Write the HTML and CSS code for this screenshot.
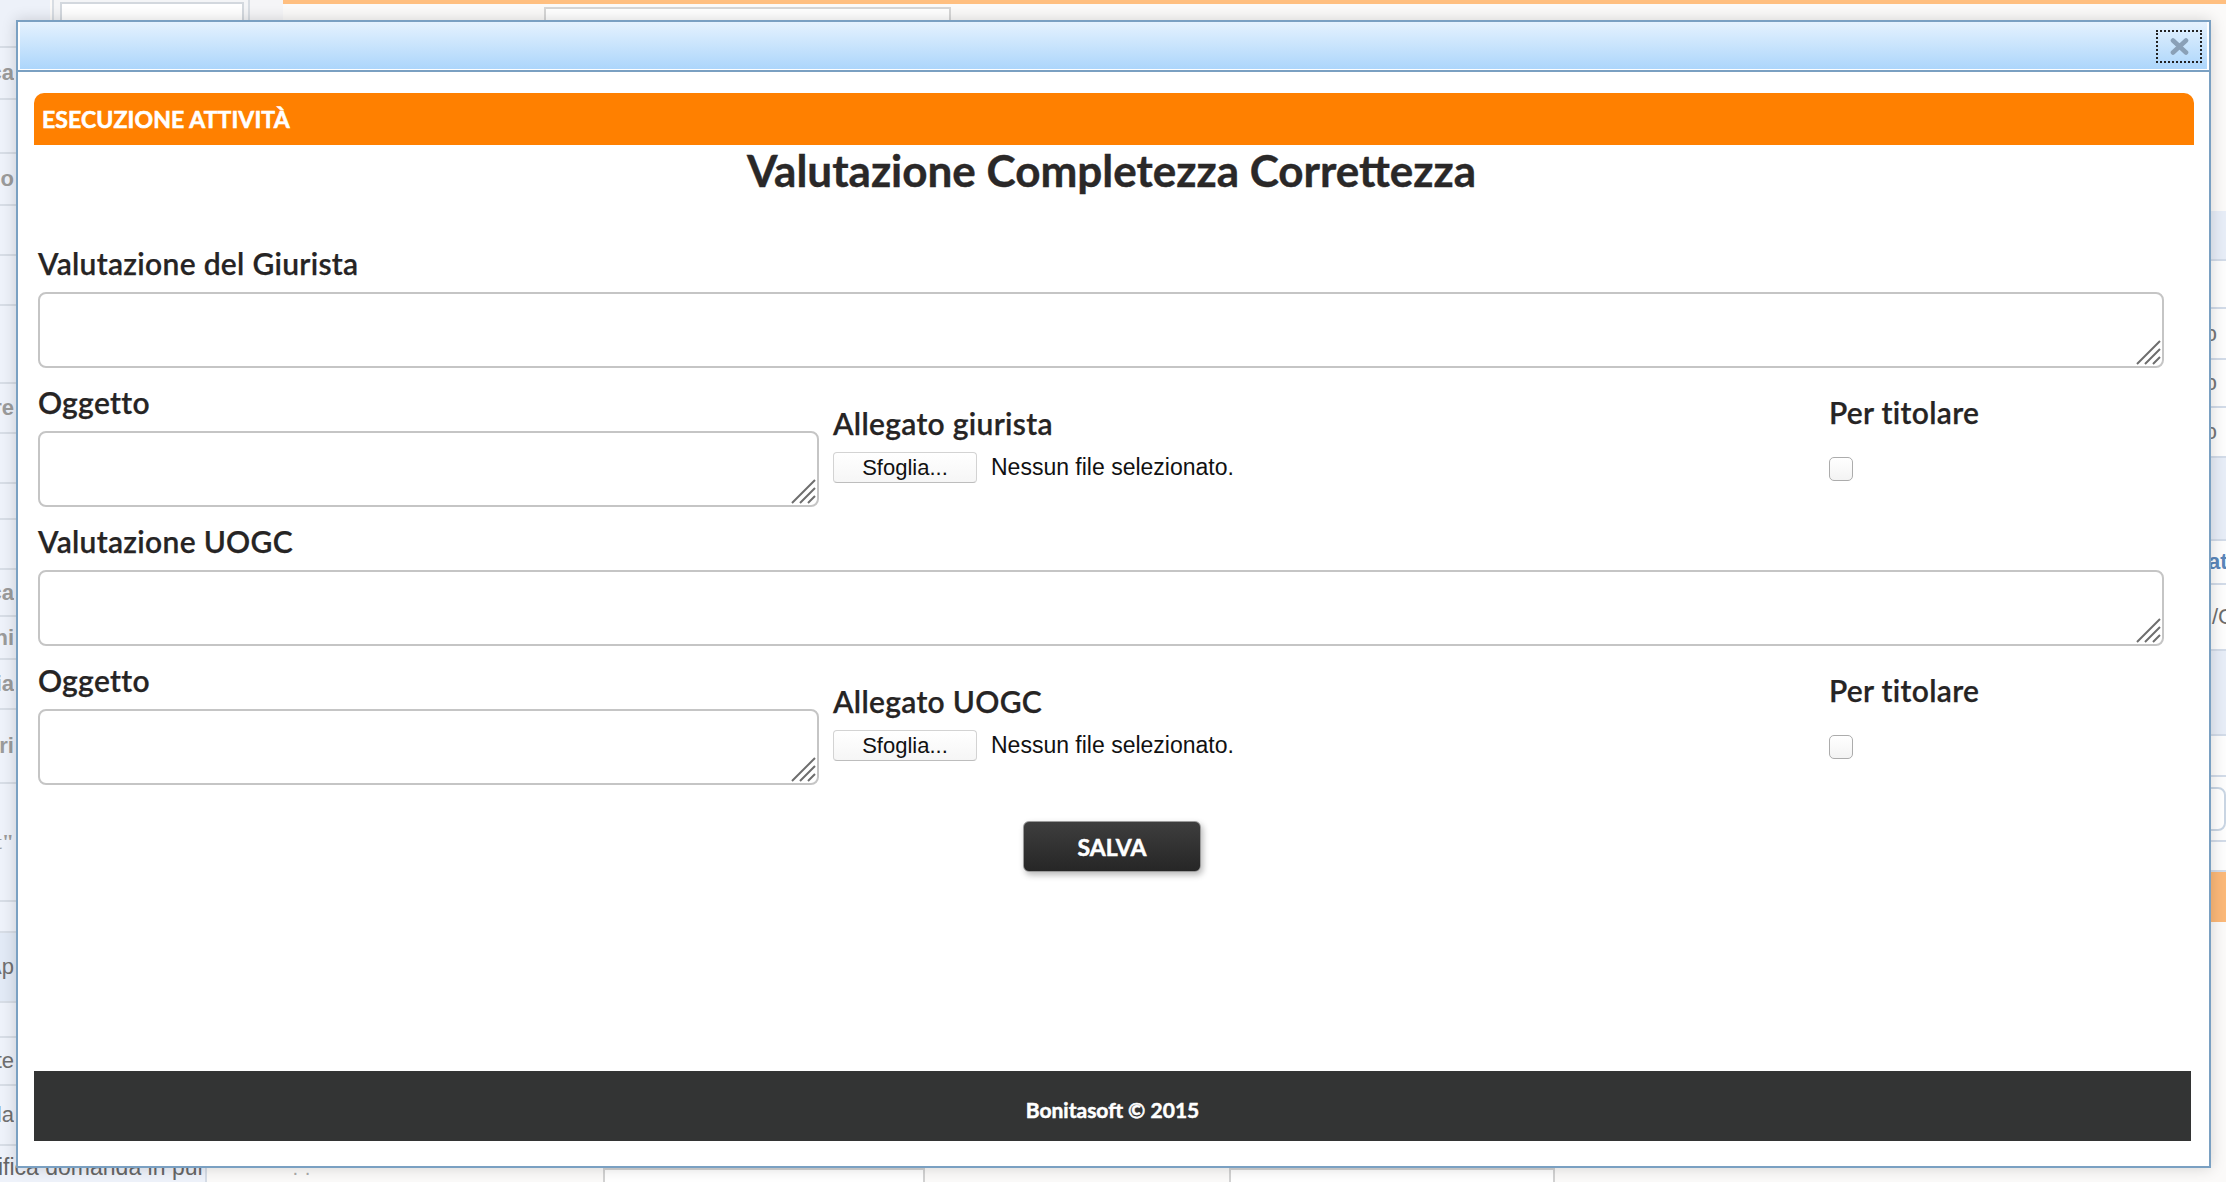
FILE: index.html
```html
<!DOCTYPE html>
<html lang="it">
<head>
<meta charset="utf-8">
<title>Esecuzione attività</title>
<link rel="stylesheet" href="styles.css">
</head>
<body>
<div class="page">
  <header class="topband">
    <div class="tb-side"></div>
    <div class="tb-box"><div class="tb-input"></div></div>
    <div class="tb-gap"></div>
    <div class="tb-main">
      <span class="tb-ghost">il tipo</span>
      <div class="tb-field"></div>
    </div>
  </header>
  <div class="content">
    <nav class="sidebar">
      <div class="side-row s52"><span class="fbox"><span class="frag">Pratica</span></span></div>
      <div class="side-row s54"></div>
      <div class="side-row s52"><span class="fbox"><span class="frag">Calendario</span></span></div>
      <div class="side-row s50"></div>
      <div class="side-row s50"></div>
      <div class="side-row s78"></div>
      <div class="side-row s50"><span class="fbox"><span class="frag">Protocollatore</span></span></div>
      <div class="side-row s50"></div>
      <div class="side-row s36"></div>
      <div class="side-row s50"></div>
      <div class="side-row s47"><span class="fbox"><span class="frag">Verifica</span></span></div>
      <div class="side-row s43"><span class="fbox"><span class="frag">Notifichi</span></span></div>
      <div class="side-row s50"><span class="fbox"><span class="frag">Istruttoria</span></span></div>
      <div class="side-row s74"><span class="fbox"><span class="frag">Istruttori</span></span></div>
      <div class="side-row s118"><span class="fbox"><span class="frag serif">"Art"</span></span></div>
      <div class="side-row s31"></div>
      <div class="side-row s70 hl"><span class="fbox"><span class="frag dark">Ap</span></span></div>
      <div class="side-row s35"></div>
      <div class="side-row s48"><span class="fbox"><span class="frag dark">Richieste</span></span></div>
      <div class="side-row s60"><span class="fbox"><span class="frag dark">Scheda</span></span></div>
      <div class="side-last">ifica domanda in pur</div>
    </nav>
    <main class="main">
      <div class="main-area">
        <div class="bottom-boxes">
          <span class="bb-ghost">· ·</span>
          <div class="bb-box one"></div>
          <div class="bb-box two"></div>
        </div>
      </div>
      <aside class="rpanel">
        <div class="rp-row blue h50"></div>
        <div class="rp-row h48"></div>
        <div class="rp-row h51 end"><span>Esito</span></div>
        <div class="rp-row h48 end"><span>Tipo</span></div>
        <div class="rp-row h50 end"><span>Anno</span></div>
        <div class="rp-row blue h83"></div>
        <div class="rp-row h44 strong"><span>Stato</span></div>
        <div class="rp-row h66 slash"><span>/CDR</span></div>
        <div class="rp-row blue h85"></div>
        <div class="rp-row h41"></div>
        <div class="rp-row h65 boxed"><div class="rp-btn"></div></div>
        <div class="rp-row h30"></div>
        <div class="rp-row orange h50"></div>
      </aside>
    </main>
  </div>
</div>

<div class="modal" role="dialog" aria-label="Esecuzione attività">
  <div class="titlebar">
    <button class="close" aria-label="Chiudi">
      <svg width="19" height="17" viewBox="0 0 19 17"><path d="M3 2.5 L16 14.5 M16 2.5 L3 14.5" stroke="#8aa0b7" stroke-width="4.6" stroke-linecap="round"/></svg>
    </button>
  </div>
  <div class="mbody">
    <div class="hdr">ESECUZIONE ATTIVITÀ</div>
    <h1 class="title">Valutazione Completezza Correttezza</h1>
    <form class="form">
      <div class="field">
        <label class="lbl" for="vg">Valutazione del Giurista</label>
        <div class="ta"><textarea id="vg"></textarea><svg class="grip" width="26" height="26" viewBox="0 0 26 26"><path d="M2 25 L25 2 M10 25 L25 10 M18 25 L25 18" stroke="#6e6e6e" stroke-width="2"/></svg></div>
      </div>
      <div class="row">
        <div class="field">
          <label class="lbl" for="og1">Oggetto</label>
          <div class="ta"><textarea id="og1"></textarea><svg class="grip" width="26" height="26" viewBox="0 0 26 26"><path d="M2 25 L25 2 M10 25 L25 10 M18 25 L25 18" stroke="#6e6e6e" stroke-width="2"/></svg></div>
        </div>
        <div class="field col-file">
          <span class="lbl">Allegato giurista</span>
          <div class="file"><span class="file-btn">Sfoglia...</span><span class="file-name">Nessun file selezionato.</span></div>
        </div>
        <div class="field col-check">
          <label class="lbl" for="pt1">Per titolare</label>
          <input type="checkbox" id="pt1" class="check">
        </div>
      </div>
      <div class="field gap">
        <label class="lbl" for="vu">Valutazione UOGC</label>
        <div class="ta"><textarea id="vu"></textarea><svg class="grip" width="26" height="26" viewBox="0 0 26 26"><path d="M2 25 L25 2 M10 25 L25 10 M18 25 L25 18" stroke="#6e6e6e" stroke-width="2"/></svg></div>
      </div>
      <div class="row">
        <div class="field">
          <label class="lbl" for="og2">Oggetto</label>
          <div class="ta"><textarea id="og2"></textarea><svg class="grip" width="26" height="26" viewBox="0 0 26 26"><path d="M2 25 L25 2 M10 25 L25 10 M18 25 L25 18" stroke="#6e6e6e" stroke-width="2"/></svg></div>
        </div>
        <div class="field col-file">
          <span class="lbl">Allegato UOGC</span>
          <div class="file"><span class="file-btn">Sfoglia...</span><span class="file-name">Nessun file selezionato.</span></div>
        </div>
        <div class="field col-check">
          <label class="lbl" for="pt2">Per titolare</label>
          <input type="checkbox" id="pt2" class="check">
        </div>
      </div>
      <div class="actions"><button type="button" class="save">SALVA</button></div>
    </form>
    <footer class="mfoot">Bonitasoft © 2015</footer>
  </div>
</div>
</body>
</html>
```

FILE: styles.css
```css
html, body {
  margin: 0;
  padding: 0;
}
body {
  width: 2226px;
  height: 1182px;
  overflow: hidden;
  position: relative;
  background: #fbfaf9;
  font-family: "Liberation Sans", Arial, sans-serif;
}

/* ---------- background page ---------- */
.page {
  display: flex;
  flex-direction: column;
  height: 1182px;
}
.topband {
  display: flex;
  height: 48px;
  flex: 0 0 auto;
}
.tb-side {
  width: 50px;
  background: #edf1f9;
  border-bottom: 2px solid #d6dce5;
  box-sizing: border-box;
}
.tb-box {
  width: 198px;
  margin-left: 2px;
  box-sizing: border-box;
  border-left: 2px solid #d8dde3;
  border-right: 2px solid #d8dde3;
  background: #f4f5f7;
  padding: 2px 4px 0 6px;
}
.tb-input {
  height: 38px;
  border: 2px solid #d3d8de;
  background: linear-gradient(#ffffff 60%, #f1f1f1);
}
.tb-gap {
  width: 33px;
  background: #f5f5f7;
}
.tb-main {
  flex: 1;
  border-top: 4px solid #ffbf80;
  background: #fbfaf9;
  display: flex;
  align-items: flex-start;
  padding-left: 34px;
}
.tb-ghost {
  margin-top: 12px;
  color: #b5b5b5;
  font-size: 22px;
  font-weight: 700;
  width: 227px;
}
.tb-field {
  margin-top: 3px;
  width: 403px;
  height: 40px;
  border: 2px solid #d6d6d6;
  background: #fff;
}
.content {
  flex: 1;
  display: flex;
  min-height: 0;
}
.sidebar {
  width: 207px;
  flex: 0 0 auto;
  background: #eef2fa;
  border-right: 2px solid #d5dce6;
  box-sizing: border-box;
  display: flex;
  flex-direction: column;
}
.side-row {
  flex: 0 0 auto;
  border-bottom: 2px solid #d7dde6;
  box-sizing: border-box;
  display: flex;
  align-items: center;
}
.side-row.hl { background: #e2eaf6; }
.s31 { height: 31px; }
.s35 { height: 35px; }
.s36 { height: 36px; }
.s43 { height: 43px; }
.s47 { height: 47px; }
.s48 { height: 48px; }
.s50 { height: 50px; }
.s52 { height: 52px; }
.s54 { height: 54px; }
.s60 { height: 60px; }
.s70 { height: 70px; }
.s74 { height: 74px; }
.s78 { height: 78px; }
.s118 { height: 118px; }
.fbox {
  width: 14px;
  display: flex;
  justify-content: flex-end;
  overflow: hidden;
}
.frag {
  flex: 0 0 auto;
  white-space: nowrap;
  color: #9b9b9b;
  font-size: 22px;
  font-weight: 700;
}
.frag.serif { font-family: "Liberation Serif", serif; }
.frag.dark { color: #707070; font-weight: 400; }
.side-last {
  margin-top: auto;
  height: 30px;
  line-height: 30px;
  padding-top: 4px;
  margin-left: -2px;
  white-space: nowrap;
  color: #666;
  font-size: 23px;
  overflow: hidden;
}
.main {
  flex: 1;
  display: flex;
  min-width: 0;
}
.main-area {
  flex: 1;
  display: flex;
  flex-direction: column;
}
.bottom-boxes {
  margin-top: auto;
  height: 14px;
  display: flex;
  align-items: flex-start;
  padding-top: 2px;
}
.bb-ghost {
  margin-left: 85px;
  width: 311px;
  color: #aaa;
  font-size: 20px;
  line-height: 8px;
}
.bb-box {
  height: 20px;
  border: 2px solid #d2d2d2;
  background: #fff;
}
.bb-box.one { width: 318px; }
.bb-box.two { width: 322px; margin-left: 304px; }
.rpanel {
  width: 34px;
  flex: 0 0 auto;
  display: flex;
  flex-direction: column;
  padding-top: 163px;
  font-size: 22px;
  color: #777;
}
.rp-row {
  border-bottom: 2px solid #d2dbe8;
  box-sizing: border-box;
  display: flex;
  align-items: center;
  overflow: hidden;
  white-space: nowrap;
  background: #fdfdfd;
}
.rp-row.blue { background: #e7edf7; }
.rp-row.orange { background: #fbb878; border-bottom: 0; }
.rp-row.end { justify-content: flex-end; padding-right: 9px; }
.rp-row.strong span { color: #5a86b9; font-weight: 700; margin-left: -6px; }
.rp-row.slash span { margin-left: 20px; color: #6d6d6d; }
.rp-row.boxed { align-items: center; }
.rp-btn {
  margin-left: 1px;
  width: 60px;
  height: 40px;
  border: 2px solid #c9d5e3;
  border-radius: 8px;
  background: #fff;
}
.h30 { height: 30px; }
.h41 { height: 41px; }
.h44 { height: 44px; }
.h48 { height: 48px; }
.h50 { height: 50px; }
.h51 { height: 51px; }
.h65 { height: 65px; }
.h66 { height: 66px; }
.h83 { height: 83px; }
.h85 { height: 85px; }

/* ---------- modal ---------- */
.modal {
  position: absolute;
  left: 16px;
  top: 20px;
  width: 2195px;
  height: 1148px;
  box-sizing: border-box;
  border: 2px solid #7aa0c2;
  background: #fff;
  box-shadow: 0 0 14px rgba(0, 0, 0, 0.16);
  display: flex;
  flex-direction: column;
  font-family: Lato, "Open Sans", "Liberation Sans", sans-serif;
}
.titlebar {
  flex: 0 0 auto;
  height: 48px;
  box-sizing: content-box;
  background: linear-gradient(#e5f2fe, #abd5fb);
  border-bottom: 2px solid #7aa0c2;
  box-shadow: inset 0 -1px 0 #ffffff, inset -2px 0 0 #ffffff, inset 2px 0 0 #ffffff;
  display: flex;
  justify-content: flex-end;
  align-items: flex-start;
  padding-right: 7px;
}
.close {
  margin-top: 8px;
  width: 46px;
  height: 33px;
  box-sizing: border-box;
  border: 2px dotted #222;
  background: transparent;
  padding: 0;
  display: flex;
  align-items: center;
  justify-content: center;
  cursor: pointer;
}
.close svg {
  display: block;
  filter: blur(0.6px);
}
.mbody {
  flex: 1;
  display: flex;
  flex-direction: column;
  padding: 21px 15px 25px 16px;
  min-height: 0;
}
.hdr {
  height: 52px;
  flex: 0 0 auto;
  background: #ff8000;
  border-radius: 10px 10px 0 0;
  display: flex;
  align-items: center;
  padding-left: 8px;
  color: #fff;
  font-size: 23px;
  font-weight: 700;
  letter-spacing: 0.1px;
  -webkit-text-stroke: 0.6px #ffffff;
}
.title {
  margin: 0;
  text-align: center;
  font-size: 44px;
  line-height: 50px;
  font-weight: 700;
  color: #2a2828;
  padding-right: 5px;
  -webkit-text-stroke: 0.4px #2a2828;
}
.form {
  padding: 0 30px 0 4px;
  margin-top: 50px;
}
.lbl {
  display: block;
  font-size: 30px;
  line-height: 36px;
  font-weight: 600;
  letter-spacing: 0.3px;
  color: #262424;
  -webkit-text-stroke: 0.25px #262424;
  margin-bottom: 11px;
  white-space: nowrap;
}
.ta {
  position: relative;
  height: 76px;
}
.ta textarea {
  display: block;
  width: 100%;
  height: 76px;
  box-sizing: border-box;
  border: 2px solid #c5c5c5;
  border-radius: 8px;
  resize: none;
  background: #fff;
  margin: 0;
  font: inherit;
}
.grip {
  position: absolute;
  right: 3px;
  bottom: 3px;
  display: block;
}
.field.gap { margin-top: 16px; }
.row {
  display: grid;
  grid-template-columns: 781px 982px 1fr;
  column-gap: 14px;
  margin-top: 16px;
  align-items: start;
}
.col-file { margin-top: 21px; }
.col-check { margin-top: 10px; }
.file {
  display: flex;
  align-items: center;
  margin-top: 1px;
}
.file-btn {
  width: 144px;
  height: 31px;
  box-sizing: border-box;
  border: 1px solid #d3d3d3;
  border-bottom-color: #bdbdbd;
  border-radius: 4px;
  background: linear-gradient(#ffffff, #f6f6f6);
  font-family: "Liberation Sans", Arial, sans-serif;
  font-size: 22px;
  color: #111;
  display: flex;
  align-items: center;
  justify-content: center;
}
.file-name {
  margin-left: 14px;
  font-family: "Liberation Sans", Arial, sans-serif;
  font-size: 23px;
  color: #111;
}
.check {
  -webkit-appearance: none;
  appearance: none;
  display: block;
  margin: 27px 0 0 0;
  width: 24px;
  height: 24px;
  box-sizing: border-box;
  border: 1px solid #acacac;
  border-radius: 5px;
  background: linear-gradient(#ffffff, #f3f3f3);
}
.actions {
  display: flex;
  justify-content: center;
  margin-top: 36px;
  padding-left: 22px;
}
.save {
  width: 178px;
  height: 51px;
  box-sizing: border-box;
  border: 1px solid #9a9a9a;
  border-radius: 6px;
  background: linear-gradient(#3e3e3e, #262626);
  box-shadow: 2px 3px 6px rgba(0, 0, 0, 0.28);
  color: #fff;
  font-family: Lato, "Open Sans", sans-serif;
  font-size: 23px;
  font-weight: 700;
  -webkit-text-stroke: 0.5px #ffffff;
  cursor: pointer;
}
.mfoot {
  margin-top: auto;
  margin-right: 3px;
  height: 70px;
  flex: 0 0 auto;
  background: #333434;
  color: #fff;
  font-size: 21px;
  font-weight: 700;
  -webkit-text-stroke: 0.5px #ffffff;
  display: flex;
  align-items: center;
  justify-content: center;
  padding-top: 6px;
  box-sizing: border-box;
}
```
